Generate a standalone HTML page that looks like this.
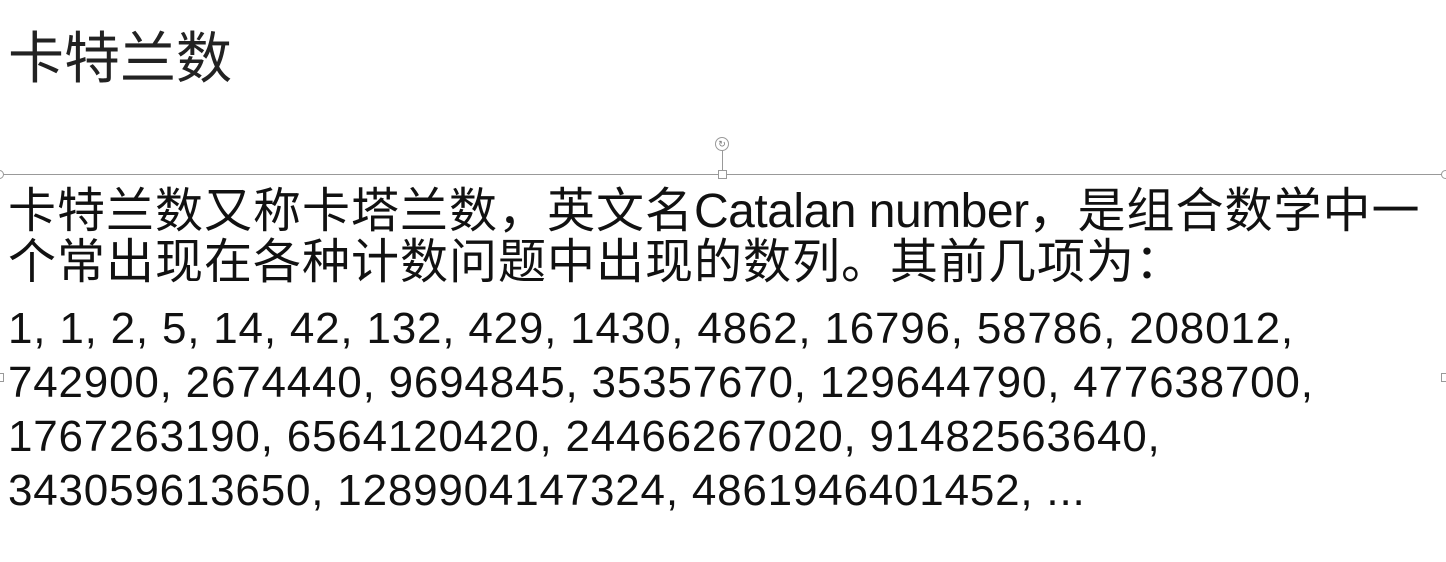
<!DOCTYPE html>
<html><head><meta charset="utf-8"><style>
body{margin:0;width:1446px;height:562px;background:#fff;position:relative;overflow:hidden;font-family:"Liberation Sans","Noto Sans CJK SC",sans-serif;color:#111}
.t{position:absolute;left:8px;top:27px;font-size:56px;line-height:64px;white-space:nowrap;color:#222}
.b{position:absolute;left:8px;top:186px;font-size:48px;line-height:51px;letter-spacing:1.0px;white-space:nowrap}
.b span{letter-spacing:-0.5px}
.n{position:absolute;left:8px;top:302px;font-size:44px;line-height:54px;letter-spacing:0.8px;white-space:nowrap}
.hl{position:absolute;left:0;top:174px;width:1446px;height:1px;background:#999}
.h{position:absolute;width:7px;height:7px;border:1px solid #999;background:#fff}
</style></head><body>
<div class="t">卡特兰数</div>
<div class="hl"></div>
<div style="position:absolute;left:722px;top:150px;width:1px;height:22px;background:#999"></div>
<div style="position:absolute;left:715px;top:137px;width:12px;height:12px;border:1px solid #999;border-radius:50%;background:#fff;font-size:9px;line-height:12px;text-align:center;color:#777">↻</div>
<div class="h" style="left:718px;top:170px"></div>
<div class="h" style="left:-5px;top:170px;border-radius:50%"></div>
<div class="h" style="left:1441px;top:170px;border-radius:50%"></div>
<div class="h" style="left:-5px;top:373px"></div>
<div class="h" style="left:1441px;top:373px"></div>
<div class="b">卡特兰数又称卡塔兰数，英文名<span>Catalan number</span>，是组合数学中一<br>个常出现在各种计数问题中出现的数列。其前几项为：</div>
<div class="n">1, 1, 2, 5, 14, 42, 132, 429, 1430, 4862, 16796, 58786, 208012,<br>742900, 2674440, 9694845, 35357670, 129644790, 477638700,<br>1767263190, 6564120420, 24466267020, 91482563640,<br>343059613650, 1289904147324, 4861946401452, ...</div>
</body></html>
